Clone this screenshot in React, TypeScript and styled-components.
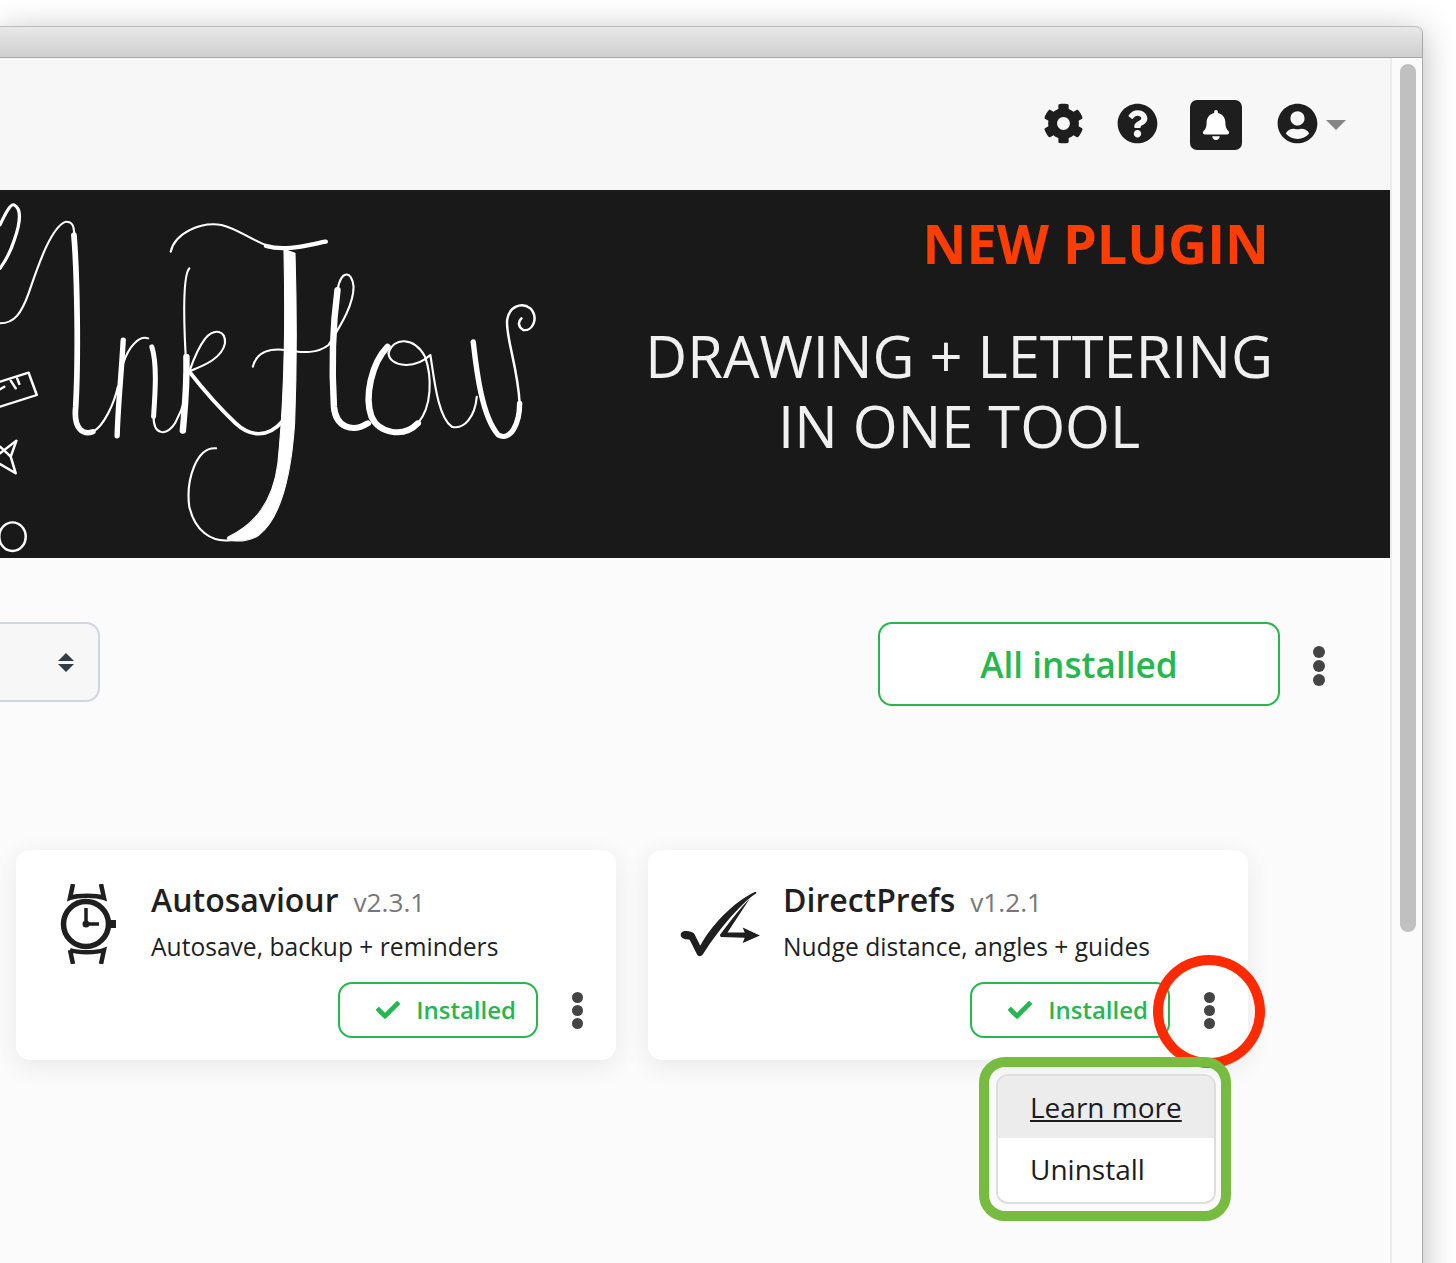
import React from "react";
import styled, { createGlobalStyle } from "styled-components";
import { FaCog, FaQuestionCircle, FaBell, FaUserCircle, FaCheck } from "react-icons/fa";

const Global = createGlobalStyle`
  html, body { margin: 0; padding: 0; background: #fff; }
  body { font-family: "Open Sans", "Liberation Sans", sans-serif; color: #1c1c1c; overflow: hidden; }
`;

const Page = styled.div`
  height: 1263px;
  padding-top: 26px;
  box-sizing: border-box;
  overflow: hidden;
`;
const Win = styled.div`
  width: 1423px;
  height: 1300px;
  box-sizing: border-box;
  border-right: 1px solid #a9a9a9;
  border-top-right-radius: 7px;
  box-shadow: 0 6px 34px rgba(0, 0, 0, 0.28);
  background: #fff;
  display: flex;
  flex-direction: column;
`;
const TitleBar = styled.div`
  height: 32px;
  flex: none;
  box-sizing: border-box;
  background: linear-gradient(#e9e8e9, #cfcecf);
  border-top: 1px solid #bdbdbd;
  border-bottom: 1px solid #a8a8a8;
  border-top-right-radius: 7px;
`;
const Body = styled.div`
  flex: 1;
  display: flex;
  min-height: 0;
`;
const Main = styled.div`
  flex: 1;
  min-width: 0;
  background: #fbfbfb;
`;
const ScrollTrack = styled.div`
  width: 32px;
  flex: none;
  box-sizing: border-box;
  border-left: 2px solid #ececec;
  background: #fbfbfb;
  padding: 6px 6px 0 8px;
`;
const ScrollThumb = styled.div`
  height: 868px;
  border-radius: 8px;
  background: #c0c0c0;
`;
const TopBar = styled.div`
  height: 132px;
  box-sizing: border-box;
  background: #f7f7f7;
  display: flex;
  align-items: center;
  justify-content: flex-end;
  padding: 0 44px 2px 0;
  color: #1e1e1e;
`;
const TopIcon = styled.span<{ $gap: number }>`
  display: flex;
  font-size: 41px;
  margin-right: ${(p) => p.$gap}px;
`;
const BellBox = styled.span`
  width: 52px;
  height: 50px;
  margin-top: 4px;
  border-radius: 7px;
  background: #1e1e1e;
  color: #fff;
  display: flex;
  align-items: center;
  justify-content: center;
  font-size: 30px;
  margin-right: 35px;
`;
const Caret = styled.span`
  width: 0;
  height: 0;
  margin: 4px 0 0 8px;
  border-left: 10px solid transparent;
  border-right: 10px solid transparent;
  border-top: 10px solid #868686;
`;
const Banner = styled.div`
  height: 368px;
  background: #191919;
  display: flex;
  justify-content: space-between;
  padding-right: 117px;
`;
const BannerText = styled.div`
  display: flex;
  flex-direction: column;
  align-items: center;
  padding-top: 16px;
`;
const NewPlugin = styled.div`
  align-self: flex-end;
  margin-right: 4px;
  font-size: 54px;
  font-weight: 700;
  line-height: 74px;
  color: #ff3d00;
`;
const Tagline = styled.div`
  margin-top: 41px;
  font-size: 57.8px;
  font-weight: 400;
  line-height: 70px;
  color: #f0f0f0;
  text-align: center;
`;
const Controls = styled.div`
  display: flex;
  justify-content: space-between;
  align-items: flex-start;
  padding: 64px 32px 0 0;
`;
const SelectBox = styled.div`
  width: 100px;
  height: 80px;
  box-sizing: border-box;
  background: #f7f7f8;
  border: 2px solid #d1d6de;
  border-left: none;
  border-radius: 0 14px 14px 0;
  display: flex;
  flex-direction: column;
  align-items: flex-end;
  justify-content: center;
  gap: 3px;
  padding-right: 24px;
`;
const Arrow = styled.span<{ $up?: boolean }>`
  width: 0;
  height: 0;
  border-left: 8px solid transparent;
  border-right: 8px solid transparent;
  ${(p) => (p.$up ? "border-bottom" : "border-top")}: 8px solid #333b45;
`;
const ActionGroup = styled.div`
  display: flex;
  align-items: center;
`;
const AllInstalled = styled.div`
  width: 402px;
  height: 84px;
  box-sizing: border-box;
  border: 2px solid #26b74f;
  border-radius: 14px;
  background: #fff;
  color: #26b74f;
  font-size: 35.2px;
  font-weight: 600;
  display: flex;
  align-items: center;
  justify-content: center;
`;
const Kebab = styled.div<{ $dot: number; $gap: number; $w: number }>`
  width: ${(p) => p.$w}px;
  flex: none;
  display: flex;
  flex-direction: column;
  align-items: center;
  gap: ${(p) => p.$gap}px;
  span {
    width: ${(p) => p.$dot}px;
    height: ${(p) => p.$dot}px;
    border-radius: 50%;
    background: #444;
  }
`;
const TopKebab = styled.div`
  padding-top: 4px;
`;
const Cards = styled.div`
  display: flex;
  gap: 32px;
  padding: 144px 0 0 16px;
`;
const Card = styled.div`
  position: relative;
  width: 600px;
  height: 210px;
  box-sizing: border-box;
  background: #fff;
  border-radius: 14px;
  box-shadow: 0 6px 26px rgba(0, 0, 0, 0.08);
  padding: 34px 0 0 32px;
  display: grid;
  grid-template-columns: 82px 1fr;
  grid-template-rows: 98px 56px;
  column-gap: 21px;
`;
const IconSlot = styled.div`
  height: 80px;
  display: flex;
  align-items: center;
  justify-content: center;
`;
const TitleLine = styled.div`
  display: flex;
  align-items: baseline;
  gap: 15px;
  height: 34px;
  line-height: 32px;
`;
const Name = styled.span`
  font-size: 32px;
  font-weight: 600;
  color: #1f1f1f;
`;
const Version = styled.span`
  font-size: 26.2px;
  color: #777;
`;
const Desc = styled.div`
  margin-top: 12px;
  font-size: 24.6px;
  line-height: 34px;
  color: #1f1f1f;
`;
const Footer = styled.div`
  grid-column: 1 / 3;
  display: flex;
  justify-content: flex-end;
  align-items: center;
`;
const InstalledBtn = styled.div`
  width: 200px;
  height: 56px;
  box-sizing: border-box;
  border: 2px solid #26b74f;
  border-radius: 14px;
  color: #26b74f;
  font-size: 24px;
  font-weight: 600;
  line-height: 50px;
  display: flex;
  align-items: center;
  justify-content: flex-end;
  gap: 16px;
  padding-right: 20px;
  svg { font-size: 24px; }
`;
const RedRing = styled.div`
  position: absolute;
  left: 505px;
  top: 105px;
  width: 112px;
  height: 113px;
  box-sizing: border-box;
  border: 10px solid #ff2a00;
  border-radius: 50%;
`;
const GreenFrame = styled.div`
  position: absolute;
  left: 331px;
  top: 207px;
  width: 252px;
  height: 164px;
  box-sizing: border-box;
  border: 10px solid #77bb41;
  border-radius: 26px;
  padding: 7px 5px 0 7px;
`;
const Menu = styled.div`
  height: 130px;
  box-sizing: border-box;
  background: #fff;
  border: 2px solid #dedede;
  border-radius: 12px;
  overflow: hidden;
`;
const MenuItem = styled.div<{ $active?: boolean }>`
  height: 62px;
  padding-left: 32px;
  font-size: 28px;
  line-height: 62px;
  color: #1c1c1c;
  background: ${(p) => (p.$active ? "#ececec" : "#fff")};
  text-decoration: ${(p) => (p.$active ? "underline" : "none")};
`;

const Logo = () => (
  <svg width="560" height="368" viewBox="0 0 1568 1104" preserveAspectRatio="none" fill="none" stroke="#fff" strokeLinecap="round" strokeLinejoin="round">
    <g strokeWidth="6">
      <path d="M0 400C40 400 60 370 80 310C100 250 140 110 185 95C205 95 207 112 208 135" />
      <path d="M0 105C15 70 30 40 40 45C58 55 60 90 40 150C25 200 10 220 0 235" strokeWidth="9" />
      <path d="M260 725C290 710 320 640 330 590" />
      <path d="M345 520C360 470 390 435 415 445" />
      <path d="M430 680C430 735 465 740 490 700C505 670 515 640 520 620" />
      <path d="M530 235C510 260 515 400 520 500" />
      <path d="M528 545C560 530 620 510 630 460C632 420 600 415 575 445C550 480 535 530 530 545" />
      <path d="M478 185C490 130 560 95 620 105C680 120 720 170 790 175" />
      <path d="M708 530C720 480 760 475 800 480C850 490 890 490 920 465C945 420 990 350 990 290C985 240 955 240 945 300" />
      <path d="M1088 490C1090 530 1160 540 1205 495C1215 560 1225 680 1265 710C1300 720 1330 680 1335 620" />
      <path d="M1170 700C1210 650 1210 560 1190 500C1160 440 1100 440 1088 490" />
      <path d="M1455 640C1450 530 1415 440 1420 390C1425 350 1460 335 1485 355C1510 385 1490 425 1465 420C1450 410 1450 395 1460 385" strokeWidth="7" />
      <path d="M650 1050C590 1060 545 1020 530 950C520 870 550 770 605 775" />
    </g>
    <g strokeWidth="16">
      <path d="M207 135C216 250 220 500 212 650C205 720 235 735 260 725" />
      <path d="M345 450C340 550 330 650 328 738" strokeWidth="15" />
      <path d="M425 470C440 520 435 600 430 680" strokeWidth="14" />
      <path d="M522 500C524 600 515 680 512 722" strokeWidth="18" />
      <path d="M530 545C570 600 620 660 660 700C700 740 750 745 790 695" strokeWidth="11" />
      <path d="M745 168C800 185 860 165 912 155" strokeWidth="13" />
      <path d="M945 300C930 420 930 560 935 650C940 710 985 730 1030 700" strokeWidth="18" />
      <path d="M1085 470C1040 520 1020 620 1040 680C1060 730 1130 745 1170 700" strokeWidth="18" />
      <path d="M1325 455C1335 550 1350 680 1395 735C1430 755 1455 700 1455 640" strokeWidth="15" />
    </g>
    <path d="M795 178C800 400 795 640 778 820C765 930 720 1000 640 1040C620 1055 690 1062 725 1035C785 985 815 860 825 700C832 500 830 330 826 190Z" fill="#fff" stroke="#fff" strokeWidth="3" />
    <g strokeWidth="7">
      <path d="M0 575L80 548L103 615L0 650" />
      <path d="M0 598L12 590M30 572L44 595M48 565L54 582" />
      <path d="M0 790L46 752L30 800L44 850L0 822M0 770L30 800" />
      <ellipse cx="35" cy="1040" rx="37" ry="43" />
    </g>
  </svg>
);

const WatchIcon = () => (
  <svg width="58" height="80" viewBox="0 0 58 80" fill="none" stroke="#1f1f1f">
    <path d="M13 0L10 14C18 11 36 11 44 14L41 0" strokeWidth="4.5" />
    <path d="M10 66C18 69 36 69 44 66L41 80M10 66L13 80" strokeWidth="4.5" />
    <circle cx="26" cy="40" r="22.5" strokeWidth="5.5" />
    <path d="M26 24V40H39" strokeWidth="3.5" />
    <circle cx="26" cy="40" r="3.5" fill="#1f1f1f" stroke="none" />
    <rect x="50" y="36" width="6" height="8" fill="#1f1f1f" stroke="none" />
  </svg>
);

const PrefsIcon = () => (
  <svg width="82" height="68" viewBox="90 90 245 205" fill="#1f1f1f">
    <path d="M98 215C110 212 125 215 132 222L150 258C180 200 250 125 316 95C320 95 320 100 316 102C280 125 215 195 158 284C152 292 144 292 140 284L118 240C108 240 92 238 91 226C91 220 94 216 98 215Z" />
    <path d="M300 115L232 218L284 218L278 203L330 227L278 250L284 234L212 232L209 226C240 185 270 145 300 115Z" />
  </svg>
);

const Dots = (p: { dot: number; gap: number; w: number }) => (
  <Kebab $dot={p.dot} $gap={p.gap} $w={p.w}>
    <span />
    <span />
    <span />
  </Kebab>
);

export default function App() {
  return (
    <Page>
      <Global />
      <Win>
        <TitleBar />
        <Body>
          <Main>
            <TopBar>
              <TopIcon $gap={33}><FaCog /></TopIcon>
              <TopIcon $gap={32}><FaQuestionCircle /></TopIcon>
              <BellBox><FaBell /></BellBox>
              <TopIcon $gap={0}><FaUserCircle /></TopIcon>
              <Caret />
            </TopBar>
            <Banner>
              <Logo />
              <BannerText>
                <NewPlugin>NEW PLUGIN</NewPlugin>
                <Tagline>
                  DRAWING + LETTERING
                  <br />
                  IN ONE TOOL
                </Tagline>
              </BannerText>
            </Banner>
            <Controls>
              <SelectBox>
                <Arrow $up />
                <Arrow />
              </SelectBox>
              <ActionGroup>
                <AllInstalled>All installed</AllInstalled>
                <TopKebab>
                  <Dots dot={12} gap={2} w={78} />
                </TopKebab>
              </ActionGroup>
            </Controls>
            <Cards>
              <Card>
                <IconSlot><WatchIcon /></IconSlot>
                <div>
                  <TitleLine>
                    <Name>Autosaviour</Name>
                    <Version>v2.3.1</Version>
                  </TitleLine>
                  <Desc>Autosave, backup + reminders</Desc>
                </div>
                <Footer>
                  <InstalledBtn><FaCheck />Installed</InstalledBtn>
                  <Dots dot={11} gap={2} w={78} />
                </Footer>
              </Card>
              <Card>
                <IconSlot><PrefsIcon /></IconSlot>
                <div>
                  <TitleLine>
                    <Name>DirectPrefs</Name>
                    <Version>v1.2.1</Version>
                  </TitleLine>
                  <Desc>Nudge distance, angles + guides</Desc>
                </div>
                <Footer>
                  <InstalledBtn><FaCheck />Installed</InstalledBtn>
                  <Dots dot={11} gap={2} w={78} />
                </Footer>
                <RedRing />
                <GreenFrame>
                  <Menu>
                    <MenuItem $active>Learn more</MenuItem>
                    <MenuItem>Uninstall</MenuItem>
                  </Menu>
                </GreenFrame>
              </Card>
            </Cards>
          </Main>
          <ScrollTrack>
            <ScrollThumb />
          </ScrollTrack>
        </Body>
      </Win>
    </Page>
  );
}
